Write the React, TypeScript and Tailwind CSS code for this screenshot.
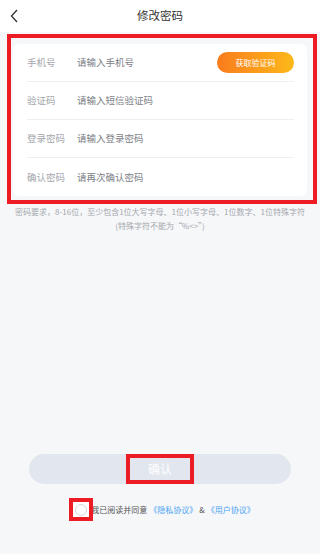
import React from "react";

const font = { fontFamily: '"Noto Sans CJK SC", "Noto Sans", sans-serif' };

function Row({ label, placeholder, last, children }: { label: string; placeholder: string; last?: boolean; children?: React.ReactNode }) {
  return (
    <div className={`flex h-[38px] items-center ${last ? "" : "border-b border-[#eeeff2]"}`}>
      <span className="w-[50px] text-[9.5px] text-[#a3a6ab]">{label}</span>
      <span className="flex-1 text-[9.5px] text-[#7d8086]">{placeholder}</span>
      {children}
    </div>
  );
}

export default function App() {
  return (
    <div className="w-[320px] h-[554px] bg-[#f6f7f9] overflow-hidden" style={font}>
      <div className="relative h-8 bg-white flex items-center justify-center">
        <svg className="absolute left-[10px] top-[9px]" width="9" height="14" viewBox="0 0 9 14">
          <polyline points="7,1 1.5,7 7,13" fill="none" stroke="#333" strokeWidth="1.3" />
        </svg>
        <span className="text-[11.5px] text-[#333]">修改密码</span>
      </div>

      <div className="mt-[2px] ml-[7px] mr-[3px] border-4 border-[#ed1c24] pl-[2px] pr-[6px] pt-[6px] pb-[4px]">
        <div className="bg-white rounded-md pl-[14px] pr-[13px]">
          <Row label="手机号" placeholder="请输入手机号">
            <div className="w-[77px] h-[21px] rounded-full bg-gradient-to-r from-[#f97b1c] to-[#fbb81a] flex items-center justify-center text-[8px] text-white">
              获取验证码
            </div>
          </Row>
          <Row label="验证码" placeholder="请输入短信验证码" />
          <Row label="登录密码" placeholder="请输入登录密码" />
          <Row label="确认密码" placeholder="请再次确认密码" last />
        </div>
      </div>

      <div className="mt-[1px] text-center text-[8px] leading-[14px] text-[#a4a7ad]">
        <div>密码要求，8-16位，至少包含1位大写字母、1位小写字母、1位数字、1位特殊字符</div>
        <div>(特殊字符不能为“%&lt;&gt;”)</div>
      </div>

      <div className="mt-[221px] mx-[29px] h-[30px] rounded-full bg-[#e2e6ee] flex items-center justify-center">
        <div className="w-[68px] h-[30px] border-4 border-[#ed1c24] flex items-center justify-center text-[12px] text-white">
          确认
        </div>
      </div>

      <div className="mt-[14px] flex items-center justify-center pl-[4px]">
        <div className="relative z-10 w-[24px] h-[23px] border-4 border-[#ed1c24] bg-white flex items-center justify-center">
          <div className="w-[12px] h-[12px] rounded-full border border-[#d5d8dd]" />
        </div>
        <span className="-ml-[2px] text-[8px] text-[#555]">我已阅读并同意</span>
        <span className="ml-[2px] text-[8px] text-[#4aa3f3]">《隐私协议》</span>
        <span className="mx-[2px] text-[8px] text-[#555]">&amp;</span>
        <span className="text-[8px] text-[#4aa3f3]">《用户协议》</span>
      </div>
    </div>
  );
}
